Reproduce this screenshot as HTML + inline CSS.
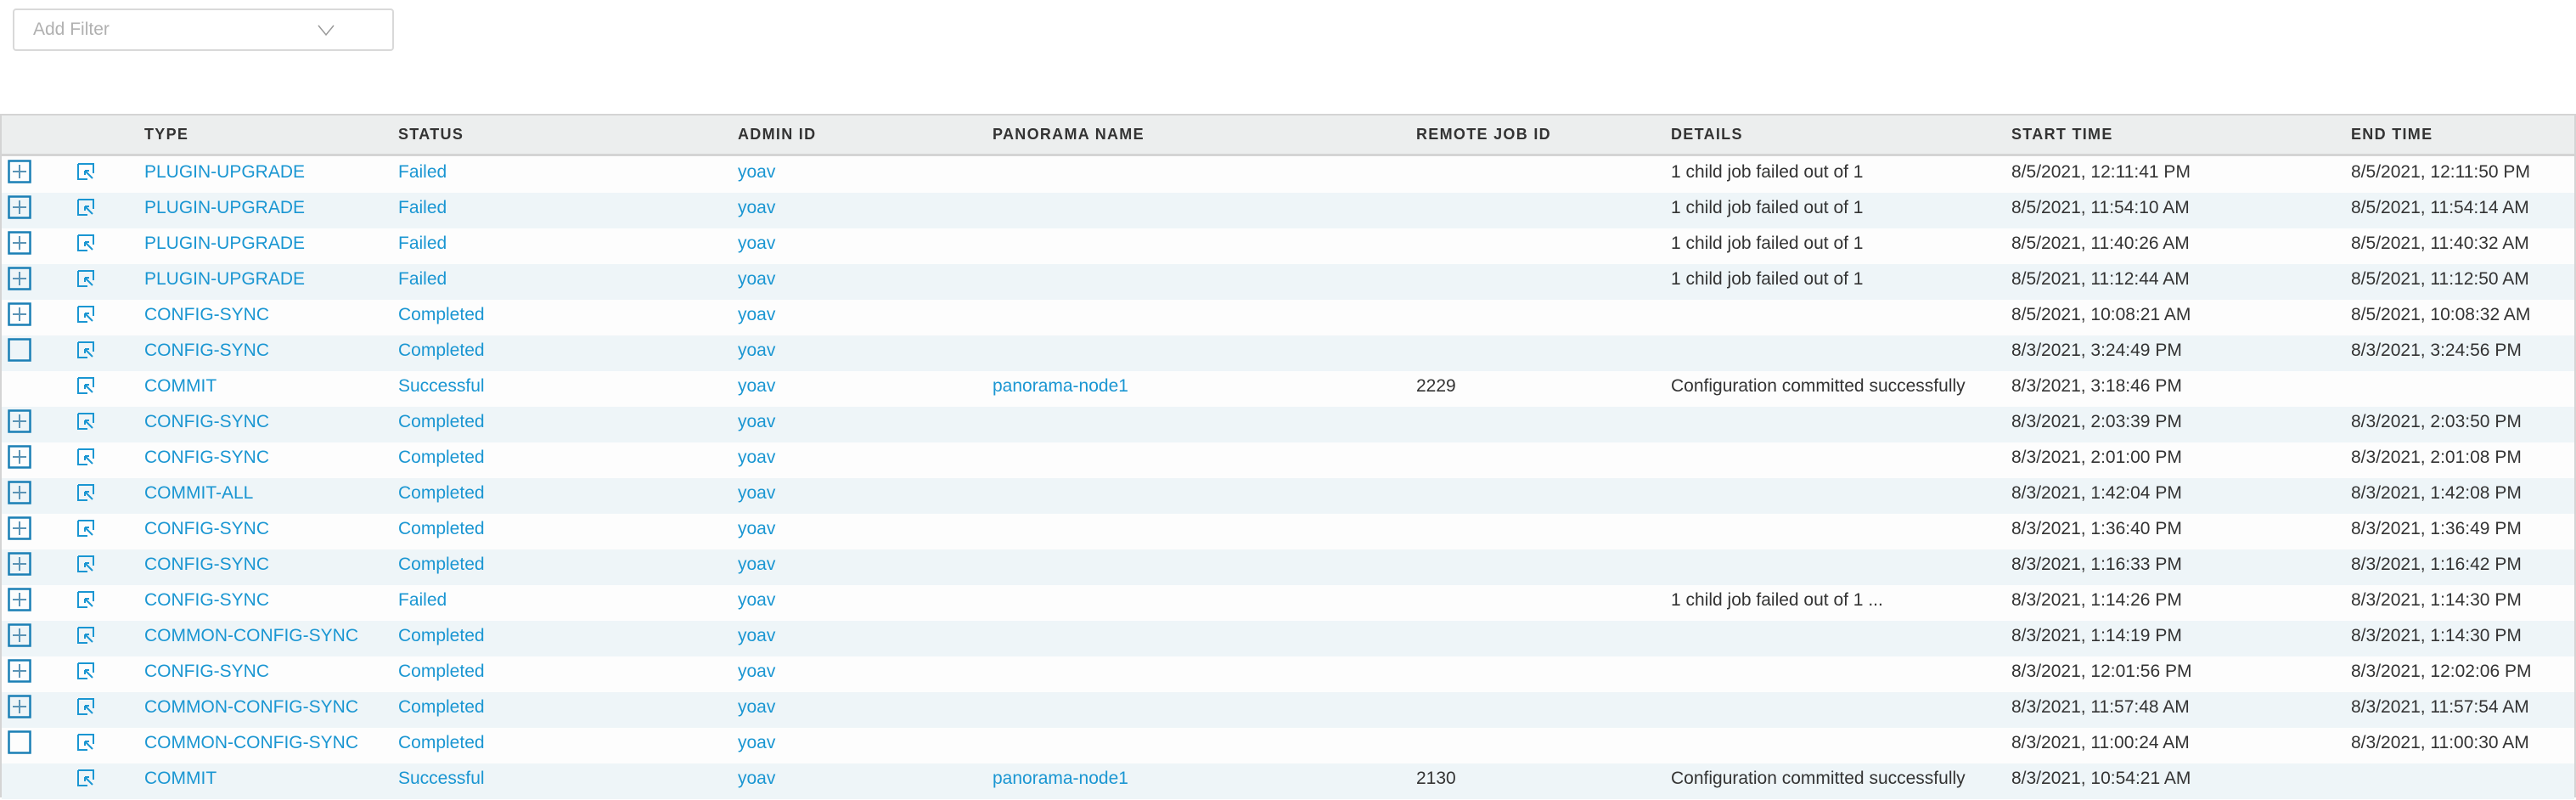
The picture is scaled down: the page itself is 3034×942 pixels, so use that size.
<!DOCTYPE html>
<html><head><meta charset="utf-8"><style>
*{margin:0;padding:0;box-sizing:border-box}
body{width:3034px;height:942px;background:#fff;font-family:"Liberation Sans",sans-serif;position:relative;overflow:hidden}
.filter{position:absolute;left:15px;top:10px;width:449px;height:50px;border:2px solid #d9d9d9;border-radius:4px}
.filter span{position:absolute;left:22px;top:11px;font-size:21px;color:#b0b0b0}
.filter svg{position:absolute;left:357px;top:17px}
.tbl{position:absolute;left:0;top:134px;width:3034px;height:805px;border:2px solid #d4d4d4;border-bottom:2px solid #d4d4d4}
.hdr{position:absolute;left:0;top:0;width:100%;height:48px;background:#eceeee;border-bottom:3px solid #d4d4d4}
.hdr div{position:absolute;top:12px;font-size:18px;font-weight:bold;letter-spacing:1.3px;color:#333}
.row{position:absolute;left:0;width:100%;height:42px;font-size:21px}
.row div{position:absolute;top:6px;white-space:nowrap}
.b{color:#1a96d2}.d{color:#333}
.row svg{position:absolute}
</style></head><body>
<div class="filter"><span>Add Filter</span><svg width="20" height="14" viewBox="0 0 20 14"><path d="M1 1 L10 12 L19 1" fill="none" stroke="#999" stroke-width="1.5"/></svg></div>
<div class="tbl">
<div class="hdr">
<div style="left:168px">TYPE</div><div style="left:467px">STATUS</div><div style="left:867px">ADMIN ID</div><div style="left:1167px">PANORAMA NAME</div><div style="left:1666px">REMOTE JOB ID</div><div style="left:1966px">DETAILS</div><div style="left:2367px">START TIME</div><div style="left:2767px">END TIME</div>
</div>
<div id="rows"></div>
</div>
<script>
var data=[
["p","PLUGIN-UPGRADE","Failed","","","1 child job failed out of 1","8/5/2021, 12:11:41 PM","8/5/2021, 12:11:50 PM"],
["p","PLUGIN-UPGRADE","Failed","","","1 child job failed out of 1","8/5/2021, 11:54:10 AM","8/5/2021, 11:54:14 AM"],
["p","PLUGIN-UPGRADE","Failed","","","1 child job failed out of 1","8/5/2021, 11:40:26 AM","8/5/2021, 11:40:32 AM"],
["p","PLUGIN-UPGRADE","Failed","","","1 child job failed out of 1","8/5/2021, 11:12:44 AM","8/5/2021, 11:12:50 AM"],
["p","CONFIG-SYNC","Completed","","","","8/5/2021, 10:08:21 AM","8/5/2021, 10:08:32 AM"],
["e","CONFIG-SYNC","Completed","","","","8/3/2021, 3:24:49 PM","8/3/2021, 3:24:56 PM"],
["n","COMMIT","Successful","panorama-node1","2229","Configuration committed successfully","8/3/2021, 3:18:46 PM",""],
["p","CONFIG-SYNC","Completed","","","","8/3/2021, 2:03:39 PM","8/3/2021, 2:03:50 PM"],
["p","CONFIG-SYNC","Completed","","","","8/3/2021, 2:01:00 PM","8/3/2021, 2:01:08 PM"],
["p","COMMIT-ALL","Completed","","","","8/3/2021, 1:42:04 PM","8/3/2021, 1:42:08 PM"],
["p","CONFIG-SYNC","Completed","","","","8/3/2021, 1:36:40 PM","8/3/2021, 1:36:49 PM"],
["p","CONFIG-SYNC","Completed","","","","8/3/2021, 1:16:33 PM","8/3/2021, 1:16:42 PM"],
["p","CONFIG-SYNC","Failed","","","1 child job failed out of 1 ...","8/3/2021, 1:14:26 PM","8/3/2021, 1:14:30 PM"],
["p","COMMON-CONFIG-SYNC","Completed","","","","8/3/2021, 1:14:19 PM","8/3/2021, 1:14:30 PM"],
["p","CONFIG-SYNC","Completed","","","","8/3/2021, 12:01:56 PM","8/3/2021, 12:02:06 PM"],
["p","COMMON-CONFIG-SYNC","Completed","","","","8/3/2021, 11:57:48 AM","8/3/2021, 11:57:54 AM"],
["e","COMMON-CONFIG-SYNC","Completed","","","","8/3/2021, 11:00:24 AM","8/3/2021, 11:00:30 AM"],
["n","COMMIT","Successful","panorama-node1","2130","Configuration committed successfully","8/3/2021, 10:54:21 AM",""]];
var h="";
data.forEach(function(r,i){
var bg=i%2?"#eef5f8":"#fdfdfd";
h+='<div class="row" style="top:'+(49+i*42)+'px;background:'+bg+'">';
if(r[0]!="n"){h+='<svg style="left:7px;top:3px" width="28" height="28" viewBox="0 0 28 28"><rect x="1.5" y="1.5" width="25" height="25" fill="none" stroke="#1a7fb5" stroke-width="2.5"/>'+(r[0]=="p"?'<path d="M14 6V22M6 14H22" stroke="#5a93b5" stroke-width="2"/>':'')+'</svg>';}
h+='<svg style="left:88px;top:6px" width="22" height="22" viewBox="0 0 22 22"><path d="M2 2H20V13M2 2V20H13" fill="none" stroke="#1a96d2" stroke-width="2"/><path d="M19 19L10 10M10 10V15M10 10H15" fill="none" stroke="#1a96d2" stroke-width="2"/></svg>';
h+='<div class="b" style="left:168px">'+r[1]+'</div><div class="b" style="left:467px">'+r[2]+'</div><div class="b" style="left:867px">yoav</div>';
h+='<div class="b" style="left:1167px">'+r[3]+'</div><div class="d" style="left:1666px">'+r[4]+'</div><div class="d" style="left:1966px">'+r[5]+'</div><div class="d" style="left:2367px">'+r[6]+'</div><div class="d" style="left:2767px">'+r[7]+'</div></div>';
});
document.getElementById("rows").innerHTML=h;
</script>
</body></html>
